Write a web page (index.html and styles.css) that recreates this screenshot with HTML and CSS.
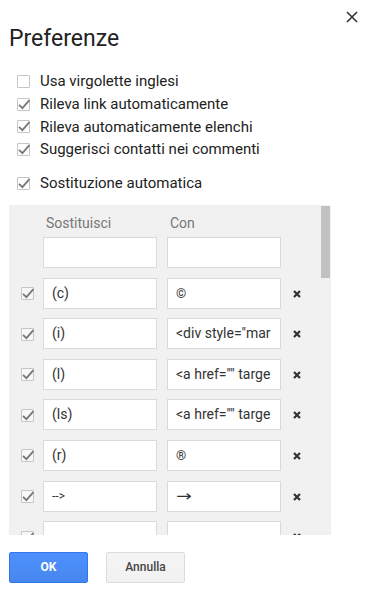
FILE: index.html
```html
<!DOCTYPE html>
<html lang="it">
<head>
<meta charset="UTF-8">
<title>Preferenze</title>
<link rel="stylesheet" href="styles.css">
</head>
<body>
<div class="dialog">
  <div class="head">
    <h1>Preferenze</h1>
    <svg class="close" width="12" height="12" viewBox="0 0 12 12"><path d="M1 1L11 11M11 1L1 11" stroke="#333" stroke-width="1.6"/></svg>
  </div>

  <div class="opts">
    <div class="opt"><span class="cb"></span><span>Usa virgolette inglesi</span></div>
    <div class="opt"><span class="cb on"><svg viewBox="0 0 13 13"><path d="M2 6.8L5.4 10.2L12.4 2.2"/></svg></span><span>Rileva link automaticamente</span></div>
    <div class="opt"><span class="cb on"><svg viewBox="0 0 13 13"><path d="M2 6.8L5.4 10.2L12.4 2.2"/></svg></span><span>Rileva automaticamente elenchi</span></div>
    <div class="opt"><span class="cb on"><svg viewBox="0 0 13 13"><path d="M2 6.8L5.4 10.2L12.4 2.2"/></svg></span><span>Suggerisci contatti nei commenti</span></div>
    <div class="opt sep"><span class="cb on"><svg viewBox="0 0 13 13"><path d="M2 6.8L5.4 10.2L12.4 2.2"/></svg></span><span>Sostituzione automatica</span></div>
  </div>

  <div class="panel">
    <div class="rules">
      <div class="rules-head">
        <div class="col-check"></div>
        <div class="lbl">Sostituisci</div>
        <div class="lbl second">Con</div>
      </div>
      <div class="rule">
        <div class="col-check"></div>
        <div class="field"><span></span></div>
        <div class="field second"><span></span></div>
      </div>
      <div class="rule">
        <div class="col-check"><span class="cb on"><svg viewBox="0 0 13 13"><path d="M2 6.8L5.4 10.2L12.4 2.2"/></svg></span></div>
        <div class="field"><span>(c)</span></div>
        <div class="field second"><span class="sym">©</span></div>
        <div class="del"><svg viewBox="0 0 8 8"><path d="M1 1L7 7M7 1L1 7"/></svg></div>
      </div>
      <div class="rule">
        <div class="col-check"><span class="cb on"><svg viewBox="0 0 13 13"><path d="M2 6.8L5.4 10.2L12.4 2.2"/></svg></span></div>
        <div class="field"><span>(i)</span></div>
        <div class="field second"><span>&lt;div style="mar</span></div>
        <div class="del"><svg viewBox="0 0 8 8"><path d="M1 1L7 7M7 1L1 7"/></svg></div>
      </div>
      <div class="rule">
        <div class="col-check"><span class="cb on"><svg viewBox="0 0 13 13"><path d="M2 6.8L5.4 10.2L12.4 2.2"/></svg></span></div>
        <div class="field"><span>(l)</span></div>
        <div class="field second"><span>&lt;a href="" targe</span></div>
        <div class="del"><svg viewBox="0 0 8 8"><path d="M1 1L7 7M7 1L1 7"/></svg></div>
      </div>
      <div class="rule">
        <div class="col-check"><span class="cb on"><svg viewBox="0 0 13 13"><path d="M2 6.8L5.4 10.2L12.4 2.2"/></svg></span></div>
        <div class="field"><span>(ls)</span></div>
        <div class="field second"><span>&lt;a href="" targe</span></div>
        <div class="del"><svg viewBox="0 0 8 8"><path d="M1 1L7 7M7 1L1 7"/></svg></div>
      </div>
      <div class="rule">
        <div class="col-check"><span class="cb on"><svg viewBox="0 0 13 13"><path d="M2 6.8L5.4 10.2L12.4 2.2"/></svg></span></div>
        <div class="field"><span>(r)</span></div>
        <div class="field second"><span class="sym">®</span></div>
        <div class="del"><svg viewBox="0 0 8 8"><path d="M1 1L7 7M7 1L1 7"/></svg></div>
      </div>
      <div class="rule">
        <div class="col-check"><span class="cb on"><svg viewBox="0 0 13 13"><path d="M2 6.8L5.4 10.2L12.4 2.2"/></svg></span></div>
        <div class="field"><span class="dash">--&gt;</span></div>
        <div class="field second"><span class="arrow">→</span></div>
        <div class="del"><svg viewBox="0 0 8 8"><path d="M1 1L7 7M7 1L1 7"/></svg></div>
      </div>
      <div class="rule">
        <div class="col-check"><span class="cb on"><svg viewBox="0 0 13 13"><path d="M2 6.8L5.4 10.2L12.4 2.2"/></svg></span></div>
        <div class="field"><span></span></div>
        <div class="field second"><span></span></div>
        <div class="del"><svg viewBox="0 0 8 8"><path d="M1 1L7 7M7 1L1 7"/></svg></div>
      </div>
    </div>
    <div class="scroll"><div class="thumb"></div></div>
  </div>

  <div class="buttons">
    <button class="btn ok">OK</button>
    <button class="btn cancel">Annulla</button>
  </div>
</div>
</body>
</html>
```

FILE: styles.css
```css
body {
  margin: 0;
  font-family: Roboto, 'Liberation Sans', Arial, sans-serif;
  background-color: #ffffff;
  color: #222;
}
.dialog {
  padding: 11px 8px 0 9px;
}
.head {
  display: flex;
  justify-content: space-between;
  align-items: flex-start;
}
h1 {
  margin: 14px 0 0;
  font-size: 23px;
  line-height: 27px;
  font-weight: normal;
  color: #222;
}
.close {
  display: block;
}
.opts {
  margin-top: 18px;
  margin-left: 8px;
}
.opt {
  display: flex;
  align-items: center;
  height: 22.7px;
  font-size: 15px;
  gap: 10px;
}
.opt.sep {
  margin-top: 11px;
}
.cb {
  position: relative;
  display: block;
  width: 13px;
  height: 13px;
  box-sizing: border-box;
  border: 1px solid #c6c6c6;
  border-radius: 1px;
  background-color: #fff;
  flex: none;
}
.cb svg {
  position: absolute;
  left: -1px;
  top: -1px;
  width: 13px;
  height: 13px;
  overflow: visible;
}
.cb svg path {
  fill: none;
  stroke: #777;
  stroke-width: 1.8;
}
.panel {
  display: flex;
  width: 322px;
  height: 330px;
  margin-top: 10.5px;
  background-color: #f1f1f1;
}
.rules {
  flex: 1;
  overflow: hidden;
}
.scroll {
  width: 10px;
  padding-top: 1px;
}
.thumb {
  width: 9px;
  height: 72px;
  background-color: #c1c1c1;
}
.rules-head {
  display: flex;
  height: 32px;
  padding-top: 10px;
  box-sizing: border-box;
  font-size: 14px;
  line-height: 16px;
  color: #777;
}
.col-check {
  width: 34px;
  padding-left: 12px;
  box-sizing: border-box;
  flex: none;
}
.lbl {
  width: 114px;
  padding-left: 3px;
  box-sizing: border-box;
}
.second {
  margin-left: 10px;
}
.rule {
  display: flex;
  align-items: center;
  height: 31px;
  margin-bottom: 9.6px;
}
.rule .cb {
  background-color: #f7f7f7;
  margin-top: 1px;
}
.field {
  width: 114px;
  height: 31px;
  box-sizing: border-box;
  border: 1px solid #d9d9d9;
  background-color: #fff;
  padding: 0 8px;
  font-size: 14px;
  line-height: 29px;
  color: #333;
  flex: none;
}
.field span {
  display: block;
  overflow: hidden;
  white-space: nowrap;
}
.field .sym {
  font-size: 13px;
}
.field .dash {
  font-size: 12px;
}
.field .arrow {
  font-family: 'DejaVu Sans', sans-serif;
  font-size: 15px;
  transform: scaleX(1.25);
  transform-origin: left center;
}
.del {
  width: 32px;
  display: flex;
  justify-content: center;
  padding-top: 1px;
}
.del svg {
  width: 8px;
  height: 8px;
}
.del svg path {
  stroke: #333;
  stroke-width: 2.2;
}
.buttons {
  display: flex;
  gap: 18px;
  margin-top: 17px;
}
.btn {
  width: 79px;
  height: 31px;
  border-radius: 2px;
  font-family: Roboto, 'Liberation Sans', Arial, sans-serif;
  font-size: 12px;
  cursor: pointer;
}
.ok {
  background: linear-gradient(#4d90fe, #4787ed);
  border: 1px solid #3079ed;
  color: #fff;
  font-weight: bold;
}
.cancel {
  background: linear-gradient(#f5f5f5, #f1f1f1);
  border: 1px solid #dcdcdc;
  color: #444;
  font-weight: 500;
}
```
